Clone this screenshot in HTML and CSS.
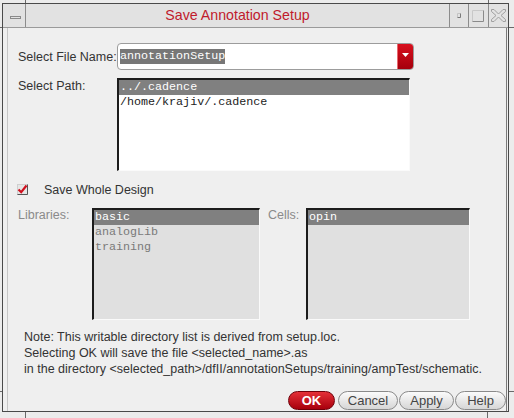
FILE: index.html
```html
<!DOCTYPE html>
<html>
<head>
<meta charset="utf-8">
<title>Save Annotation Setup</title>
<link rel="stylesheet" href="styles.css">
</head>
<body>
<div class="tick tick-tl"></div>
<div class="tick tick-tr"></div>
<div class="tick tick-bl"></div>
<div class="tick tick-br"></div>
<div class="tick tick-lt"></div>
<div class="tick tick-rt"></div>
<div class="tick tick-lb"></div>
<div class="tick tick-rb"></div>
<div class="frame">
  <div class="titlebar">
    <div class="tb-menu">
      <svg width="22" height="23" viewBox="0 0 22 23"><rect x="7.5" y="12.5" width="10" height="2" fill="none" stroke="#8a8a8a"/></svg>
    </div>
    <div class="title">Save Annotation Setup</div>
    <div class="tb-btn tb-min">
      <svg width="18" height="23" viewBox="0 0 18 23"><path d="M7.5 13.5V9.5H10.5" fill="none" stroke="#c4c4c4"/><path d="M7.5 13.5H10.5V9.5" fill="none" stroke="#7a7a7a"/></svg>
    </div>
    <div class="tb-btn tb-max">
      <svg width="19" height="23" viewBox="0 0 19 23"><path d="M3.5 17.5V6.5H14.5" fill="none" stroke="#c8c8c8"/><path d="M3.5 17.5H14.5V6.5" fill="none" stroke="#8a8a8a"/></svg>
    </div>
    <div class="tb-btn tb-close">
      <svg width="19" height="23" viewBox="0 0 19 23"><path d="M2.5 5.5H5L9.5 10L14 5.5H16.5V7.5L12 11.5L16.5 15.5V17.5H14L9.5 13L5 17.5H2.5V15.5L7 11.5L2.5 7.5Z" fill="none" stroke="#a0a0a0"/></svg>
    </div>
  </div>
  <div class="panel">
    <div class="row-file">
      <div class="label">Select File Name:</div>
      <div class="combo">
        <span class="combo-text">annotationSetup</span>
        <span class="combo-fill"></span>
        <span class="combo-arrow">
          <svg width="7" height="5" viewBox="0 0 7 5"><polygon points="0,0 7,0 3.5,4" fill="#fff"/></svg>
        </span>
      </div>
    </div>
    <div class="row-path">
      <div class="label label-top">Select Path:</div>
      <div class="list path-list">
        <div class="item sel">../.cadence</div>
        <div class="item">/home/krajiv/.cadence</div>
      </div>
    </div>
    <div class="check-row">
      <svg class="checkbox" width="11" height="11" viewBox="0 0 11 11">
        <rect x="0.5" y="0.5" width="10" height="10" fill="#e6e6e6" stroke="#cfcfcf"/>
        <path d="M0.5 10.5H10.5V0.5" fill="none" stroke="#555"/>
        <path d="M1.5 5.5L4.2 8.2L9.5 1.5" fill="none" stroke="#d0101e" stroke-width="2.2"/>
      </svg>
      <span class="check-label">Save Whole Design</span>
    </div>
    <div class="lists-row">
      <div class="label-dis lib-label">Libraries:</div>
      <div class="list dis-list lib-list">
        <div class="item sel">basic</div>
        <div class="item">analogLib</div>
        <div class="item">training</div>
      </div>
      <div class="label-dis cells-label">Cells:</div>
      <div class="list dis-list cells-list">
        <div class="item sel">opin</div>
      </div>
    </div>
    <div class="note">
      <div>Note: This writable directory list is derived from setup.loc.</div>
      <div>Selecting OK will save the file &lt;selected_name&gt;.as</div>
      <div>in the directory &lt;selected_path&gt;/dfII/annotationSetups/training/ampTest/schematic.</div>
    </div>
    <div class="buttons">
      <div class="btn btn-ok">OK</div>
      <div class="btn btn-cancel">Cancel</div>
      <div class="btn btn-apply">Apply</div>
      <div class="btn btn-help">Help</div>
    </div>
  </div>
</div>
</body>
</html>
```

FILE: styles.css
```css
html, body {
  margin: 0;
  padding: 0;
}
body {
  width: 514px;
  height: 418px;
  overflow: hidden;
  position: relative;
  background: #ececec;
  font-family: "Liberation Sans", Arial, sans-serif;
}
.tick {
  position: absolute;
  background: #6a6a6a;
}
.tick-tl { left: 25px; top: 0; width: 1px; height: 3px; }
.tick-tr { left: 488px; top: 0; width: 1px; height: 3px; }
.tick-bl { left: 25px; top: 412px; width: 1px; height: 6px; }
.tick-br { left: 487px; top: 412px; width: 1px; height: 6px; }
.tick-lt { left: 0; top: 27px; width: 2px; height: 1px; }
.tick-rt { left: 509px; top: 27px; width: 5px; height: 1px; }
.tick-lb { left: 0; top: 391px; width: 2px; height: 1px; }
.tick-rb { left: 509px; top: 391px; width: 5px; height: 1px; }

.frame {
  margin: 3px 0 0 2px;
  width: 505px;
  height: 407px;
  border: 1px solid #4a4a4a;
  background: #efefef;
  display: flex;
  flex-direction: column;
}
.titlebar {
  height: 23px;
  flex: none;
  border-bottom: 1px solid #9a9a9a;
  background: #e2e2e2;
  display: flex;
}
.tb-menu {
  width: 22px;
  border-right: 1px solid #8c8c8c;
}
.tb-menu svg, .tb-btn svg { display: block; }
.title {
  flex: 1;
  text-align: center;
  color: #c01a2c;
  font-size: 14.2px;
  line-height: 23px;
}
.tb-btn {
  border-left: 1px solid #8c8c8c;
}
.tb-min { width: 18px; }
.tb-max { width: 19px; }
.tb-close { width: 19px; }

.panel {
  flex: 1;
  margin: 0 1px 0 4px;
  border-left: 1px solid #c6c6c6;
  border-right: 1px solid #7a7a7a;
  padding: 15px 0 0 10px;
  display: flex;
  flex-direction: column;
}
.label {
  width: 99px;
  flex: none;
  font-size: 12.5px;
  color: #333;
}
.row-file {
  display: flex;
  align-items: center;
  height: 27px;
}
.combo {
  width: 297px;
  height: 27px;
  box-sizing: border-box;
  border: 1px solid #9c9c9c;
  border-radius: 4px;
  background: #fff;
  display: flex;
  align-items: center;
  overflow: hidden;
}
.combo-text {
  margin-left: 2px;
  margin-top: -1px;
  background: #777;
  color: #fff;
  font-family: "Liberation Mono", "Courier New", monospace;
  font-size: 11.7px;
  line-height: 15px;
}
.combo-fill { flex: 1; }
.combo-arrow {
  width: 15px;
  align-self: stretch;
  background: linear-gradient(#d8101e, #a5000c);
  border-left: 1px solid #e86a70;
  display: flex;
  align-items: center;
  justify-content: center;
}
.combo-arrow svg { display: block; margin-top: -2px; }

.row-path {
  display: flex;
  margin-top: 8px;
}
.label-top {
  line-height: 15px;
  margin-top: 1px;
}
.list {
  box-sizing: border-box;
  border-top: 2px solid #1c1c1c;
  border-left: 2px solid #1c1c1c;
  border-right: 1px solid #fafafa;
  border-bottom: 1px solid #fafafa;
  font-family: "Liberation Mono", "Courier New", monospace;
  font-size: 11.7px;
  line-height: 15px;
  color: #222;
}
.item {
  padding-left: 1px;
  white-space: nowrap;
}
.item.sel {
  background: #808080;
  color: #fff;
}
.path-list {
  width: 293px;
  height: 93px;
  background: #fff;
}

.check-row {
  display: flex;
  align-items: center;
  height: 11px;
  margin-top: 13px;
}
.checkbox {
  display: block;
  margin-left: -1px;
}
.check-label {
  margin-left: 16px;
  font-size: 12.5px;
  color: #333;
}

.lists-row {
  display: flex;
  height: 112px;
  margin-top: 13px;
}
.label-dis {
  flex: none;
  font-size: 12.5px;
  line-height: 15px;
  color: #8a8a8a;
}
.lib-label { width: 74px; }
.cells-label { width: 38px; margin-left: 8px; }
.dis-list {
  height: 112px;
  background: #e0e0e0;
  color: #7a7a7a;
}
.lib-list { width: 168px; }
.cells-list { width: 164px; }

.note {
  margin-top: 9px;
  margin-left: 6px;
  font-size: 12.5px;
  line-height: 16px;
  color: #333;
}

.buttons {
  display: flex;
  justify-content: flex-end;
  margin-top: 14px;
  height: 19px;
}
.btn {
  box-sizing: border-box;
  height: 19px;
  border: 1px solid #8a8a8a;
  border-radius: 10px;
  background: linear-gradient(#fbfbfb, #d6d6d6);
  font-size: 13px;
  line-height: 17px;
  text-align: center;
  color: #444;
}
.btn-ok {
  width: 47px;
  background: linear-gradient(#e43038, #a8000c);
  border-color: #70000a;
  color: #fff;
  font-weight: bold;
}
.btn-cancel { width: 60px; margin-left: 3px; }
.btn-apply { width: 55px; margin-left: 1px; }
.btn-help { width: 51px; margin-left: 1px; }
```
